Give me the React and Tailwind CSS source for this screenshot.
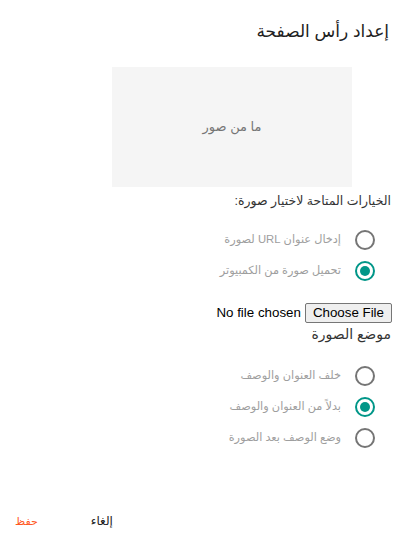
import React from "react";

function Radio({ checked, label }) {
  return (
    <label className="flex items-center gap-[14px] h-[31px] cursor-pointer">
      <span
        className={
          "flex items-center justify-center w-[20px] h-[20px] rounded-full border-2 " +
          (checked ? "border-[#009688]" : "border-[#757575]")
        }
      >
        {checked && <span className="w-[10px] h-[10px] rounded-full bg-[#009688]" />}
      </span>
      <span className="text-[11.3px] text-[#9e9e9e]">{label}</span>
    </label>
  );
}

export default function App() {
  return (
    <div
      dir="rtl"
      className="relative w-[411px] h-[543px] bg-white overflow-hidden"
      style={{ fontFamily: '"Liberation Sans", "DejaVu Sans", sans-serif' }}
    >
      <div className="pt-[19px] pr-[22px] text-[17px] leading-[26px] text-[#212121]">
        إعداد رأس الصفحة
      </div>
      <div className="flex pr-[59px] mt-[22px]">
        <div className="w-[240px] h-[120px] bg-[#f5f5f5] flex items-center justify-center text-[13px] text-[#757575]">
          ما من صور
        </div>
      </div>
      <div className="pr-[20px] mt-[6px] text-[12.5px] leading-[16px] text-[#333]">
        الخيارات المتاحة لاختيار صورة:
      </div>
      <div className="pr-[36px] mt-[15px] flex flex-col">
        <Radio label="إدخال عنوان URL لصورة" />
        <Radio checked label="تحميل صورة من الكمبيوتر" />
      </div>
      <div className="pr-[19px] mt-[17px] h-[20px] flex items-center">
        <input
          type="file"
          className="text-[13.33px] leading-[16px] text-black file:me-[4px] file:border file:border-solid file:border-[#767676] file:bg-[#efefef] file:rounded-[2px] file:px-[7px] file:py-[1px] file:text-[13.33px] file:text-black"
        />
      </div>
      <div className="pr-[20px] mt-[3px] text-[14px] leading-[16px] text-[#333]">
        موضع الصورة
      </div>
      <div className="pr-[36px] mt-[18px] flex flex-col">
        <Radio label="خلف العنوان والوصف" />
        <Radio checked label="بدلاً من العنوان والوصف" />
        <Radio label="وضع الوصف بعد الصورة" />
      </div>
      <div className="absolute bottom-[12px] left-[15px] flex flex-row-reverse gap-[53px] text-[12px] leading-[20px]">
        <span className="text-[11px] text-[#ff5722]">حفظ</span>
        <span className="text-[#212121]">إلغاء</span>
      </div>
    </div>
  );
}
